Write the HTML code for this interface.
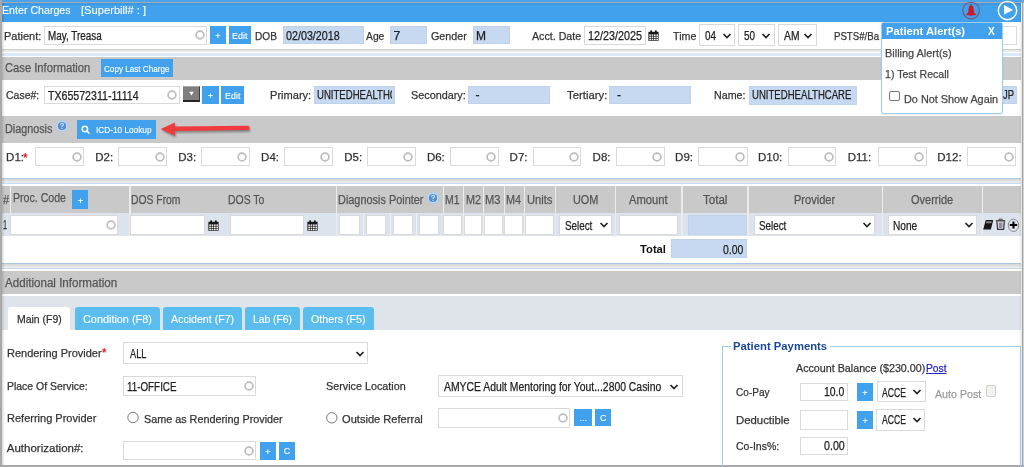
<!DOCTYPE html>
<html><head><meta charset="utf-8"><style>
html,body{margin:0;padding:0;width:1024px;height:467px;overflow:hidden;background:#fff}
body{position:relative;font-family:"Liberation Sans",sans-serif}
.a{position:absolute}
.t{position:absolute;white-space:nowrap;transform-origin:0 0;-webkit-text-stroke:0.25px currentColor}
</style></head><body>
<div style="position:absolute;left:0;top:0;width:1024px;height:467px;filter:blur(0.3px)">
<div class="a" style="left:0px;top:0px;width:1024px;height:467px;background:#fff;"></div>
<div class="a" style="left:0px;top:0px;width:1024px;height:1.5px;background:#4aa3ec;"></div>
<div class="a" style="left:0px;top:1.5px;width:1024px;height:1.5px;background:#a3abb3;"></div>
<div class="a" style="left:2px;top:3px;width:1019px;height:18.5px;background:#42a1ec;"></div>
<div class="a" style="left:2px;top:3px;width:1019px;height:2px;background:#3e98e0;"></div>
<div class="a" style="left:2px;top:48.6px;width:1019px;height:1.7999999999999972px;background:#cdcdcd;"></div>
<div class="a" style="left:2px;top:50.4px;width:1019px;height:2.1000000000000014px;background:#ebe9e5;"></div>
<div class="a" style="left:2px;top:52.5px;width:1019px;height:3.0px;background:#dbe9f8;"></div>
<div class="a" style="left:2px;top:56.5px;width:1019px;height:23.799999999999997px;background:#c9c9c9;"></div>
<div class="a" style="left:2px;top:115.6px;width:1019px;height:27.400000000000006px;background:#c9c9c9;"></div>
<div class="a" style="left:2px;top:177.8px;width:1019px;height:1.299999999999983px;background:#a9c9ea;"></div>
<div class="a" style="left:2px;top:179.1px;width:1019px;height:3.8000000000000114px;background:linear-gradient(#d6d6d6,#efefef);"></div>
<div class="a" style="left:2px;top:182.9px;width:1019px;height:1.299999999999983px;background:#c3dcf4;"></div>
<div class="a" style="left:2px;top:186px;width:1019px;height:26.69999999999999px;background:#c9c9c9;"></div>
<div class="a" style="left:2px;top:213px;width:1019px;height:22.5px;background:#dde3ec;"></div>
<div class="a" style="left:363px;top:213px;width:1px;height:22.5px;background:#eef0f3;"></div>
<div class="a" style="left:389.5px;top:213px;width:1.0px;height:22.5px;background:#eef0f3;"></div>
<div class="a" style="left:416px;top:213px;width:1px;height:22.5px;background:#eef0f3;"></div>
<div class="a" style="left:2px;top:262.5px;width:1019px;height:1.5px;background:#a9c9ea;"></div>
<div class="a" style="left:2px;top:264px;width:1019px;height:3.6000000000000227px;background:linear-gradient(#d6d6d6,#efefef);"></div>
<div class="a" style="left:2px;top:267.6px;width:1019px;height:1.7999999999999545px;background:#c3dcf4;"></div>
<div class="a" style="left:2px;top:271px;width:1019px;height:23px;background:#c9c9c9;"></div>
<div class="a" style="left:2px;top:296.2px;width:1019px;height:34.0px;background:#dfe3ea;"></div>
<div class="a" style="left:0px;top:0px;width:2px;height:467px;background:#a8a8a8;"></div>
<div class="a" style="left:2px;top:3px;width:3px;height:464px;background:linear-gradient(90deg,rgba(0,0,0,0.14),rgba(0,0,0,0));"></div>
<div class="a" style="left:1021.5px;top:0px;width:1.5px;height:467px;background:#a3a3a3;"></div>
<div class="a" style="left:1023px;top:3px;width:1px;height:464px;background:#d4d4d4;"></div>
<div class="a" style="left:1019px;top:3px;width:2.5px;height:464px;background:linear-gradient(90deg,rgba(0,0,0,0),rgba(0,0,0,0.10));"></div>
<div class="a" style="left:0px;top:464.6px;width:1024px;height:2.3999999999999773px;background:#a8a8a8;"></div>
<div class="t" style="left:2.3px;top:4.77px;font-size:11.5px;line-height:11.5px;color:#fff;-webkit-text-stroke:0.1px currentColor;transform:scaleX(0.925);">Enter Charges</div>
<div class="t" style="left:81px;top:4.77px;font-size:11.5px;line-height:11.5px;color:#fff;-webkit-text-stroke:0.1px currentColor;transform:scaleX(0.971);">[Superbill# : ]</div>
<svg class="a" style="left:961px;top:0px;" width="21" height="21" viewBox="0 0 21 21"><circle cx="10.1" cy="10.6" r="8.3" fill="none" stroke="#7d5275" stroke-width="1.1"/><path d="M10.1 5.2 Q7.9 5.2 7.6 8.2 L7.3 11.6 Q7 13.3 5.2 14.4 L5.6 15.2 L14.6 15.2 L15 14.4 Q13.2 13.3 12.9 11.6 L12.6 8.2 Q12.3 5.2 10.1 5.2 Z" fill="#cc1a26"/><rect x="9.5" y="4.3" width="1.2" height="1.3" fill="#cc1a26"/><path d="M8.7 15.2 Q10.1 17.4 11.5 15.2 Z" fill="#cc1a26"/></svg>
<svg class="a" style="left:996px;top:0px;" width="24" height="22" viewBox="0 0 24 22"><circle cx="11.5" cy="10.6" r="9.2" fill="none" stroke="#fff" stroke-width="1.4"/><path d="M8 5 L17 10 L8 14.6 Z" fill="#fff"/></svg>
<div class="t" style="left:3.9px;top:30.87px;font-size:11.5px;line-height:11.5px;color:#333;transform:scaleX(0.956);">Patient:</div>
<div class="a" style="left:44.3px;top:26.3px;width:162.5px;height:18.3px;background:#fff;box-sizing:border-box;border:1px solid #d9d9d9;"></div>
<svg class="a" style="left:193.5px;top:29.450000000000003px;" width="12" height="12" viewBox="0 0 12 12"><circle cx="6" cy="6" r="3.9" fill="none" stroke="#bcbcbc" stroke-width="1.7"/></svg>
<div class="t" style="left:47.5px;top:30.04px;font-size:12px;line-height:12px;color:#222;transform:scaleX(0.824);">May, Treasa</div>
<div class="a" style="left:209.9px;top:26px;width:16.099999999999994px;height:17.9px;background:#42a1ec;"></div>
<div class="t" style="left:215.32px;top:31.87px;font-size:9px;line-height:9px;color:#fff;-webkit-text-stroke:0.1px currentColor;">+</div>
<div class="a" style="left:229px;top:26px;width:22.30000000000001px;height:17.9px;background:#42a1ec;"></div>
<div class="t" style="left:232.3px;top:31.26px;font-size:9.5px;line-height:9.5px;color:#fff;-webkit-text-stroke:0.1px currentColor;transform:scaleX(0.938);">Edit</div>
<div class="t" style="left:254.7px;top:30.57px;font-size:11.5px;line-height:11.5px;color:#333;transform:scaleX(0.879);">DOB</div>
<div class="a" style="left:283px;top:26.3px;width:80.5px;height:17.999999999999996px;background:#c6d9f1;box-sizing:border-box;border:1px solid #c0d2ea;"></div>
<div class="t" style="left:285.8px;top:29.84px;font-size:12px;line-height:12px;color:#222;transform:scaleX(0.894);">02/03/2018</div>
<div class="t" style="left:366.3px;top:30.77px;font-size:11.5px;line-height:11.5px;color:#333;transform:scaleX(0.897);">Age</div>
<div class="a" style="left:390.2px;top:26.3px;width:37.10000000000002px;height:17.999999999999996px;background:#c6d9f1;box-sizing:border-box;border:1px solid #c0d2ea;"></div>
<div class="t" style="left:393.5px;top:29.84px;font-size:12px;line-height:12px;color:#222;">7</div>
<div class="t" style="left:430.8px;top:30.77px;font-size:11.5px;line-height:11.5px;color:#333;transform:scaleX(0.932);">Gender</div>
<div class="a" style="left:472.8px;top:26.3px;width:37.5px;height:17.999999999999996px;background:#c6d9f1;box-sizing:border-box;border:1px solid #c0d2ea;"></div>
<div class="t" style="left:476px;top:29.84px;font-size:12px;line-height:12px;color:#222;">M</div>
<div class="t" style="left:532.2px;top:30.77px;font-size:11.5px;line-height:11.5px;color:#333;transform:scaleX(0.927);">Acct. Date</div>
<div class="a" style="left:584.2px;top:26.1px;width:61.5px;height:18.799999999999997px;background:#fff;box-sizing:border-box;border:1px solid #d9d9d9;"></div>
<div class="t" style="left:587.5px;top:29.84px;font-size:12px;line-height:12px;color:#222;transform:scaleX(0.899);">12/23/2025</div>
<svg class="a" style="left:647.6px;top:30px;" width="11" height="11" viewBox="0 0 11 11"><rect x="0.4" y="1.8" width="10.2" height="9" fill="#1a1a1a"/><rect x="1.30" y="4.40" width="1.65" height="1.5" fill="#f4f4f4"/><rect x="1.30" y="6.55" width="1.65" height="1.5" fill="#f4f4f4"/><rect x="1.30" y="8.70" width="1.65" height="1.5" fill="#f4f4f4"/><rect x="3.65" y="4.40" width="1.65" height="1.5" fill="#f4f4f4"/><rect x="3.65" y="6.55" width="1.65" height="1.5" fill="#f4f4f4"/><rect x="3.65" y="8.70" width="1.65" height="1.5" fill="#f4f4f4"/><rect x="6.00" y="4.40" width="1.65" height="1.5" fill="#f4f4f4"/><rect x="6.00" y="6.55" width="1.65" height="1.5" fill="#f4f4f4"/><rect x="6.00" y="8.70" width="1.65" height="1.5" fill="#f4f4f4"/><rect x="8.35" y="4.40" width="1.65" height="1.5" fill="#f4f4f4"/><rect x="8.35" y="6.55" width="1.65" height="1.5" fill="#f4f4f4"/><rect x="8.35" y="8.70" width="1.65" height="1.5" fill="#f4f4f4"/><rect x="2.2" y="0.2" width="1.9" height="3" rx="0.9" fill="#1a1a1a"/><rect x="6.9" y="0.2" width="1.9" height="3" rx="0.9" fill="#1a1a1a"/></svg>
<div class="t" style="left:672.9px;top:30.77px;font-size:11.5px;line-height:11.5px;color:#333;transform:scaleX(0.930);">Time</div>
<div class="a" style="left:699.4px;top:24.4px;width:36.10000000000002px;height:21.5px;background:#fff;box-sizing:border-box;border:1px solid #d9d9d9;"></div>
<div class="t" style="left:705.2px;top:29.84px;font-size:12px;line-height:12px;color:#222;transform:scaleX(0.819);">04</div>
<svg class="a" style="left:722px;top:31.65px;" width="10" height="8" viewBox="0 0 10 8"><path d="M1.5 2 L5 5.5 L8.5 2" fill="none" stroke="#222" stroke-width="1.7"/></svg>
<div class="a" style="left:738.4px;top:24.4px;width:36.60000000000002px;height:21.5px;background:#fff;box-sizing:border-box;border:1px solid #d9d9d9;"></div>
<div class="t" style="left:744.3px;top:29.84px;font-size:12px;line-height:12px;color:#222;transform:scaleX(0.819);">50</div>
<svg class="a" style="left:761px;top:31.65px;" width="10" height="8" viewBox="0 0 10 8"><path d="M1.5 2 L5 5.5 L8.5 2" fill="none" stroke="#222" stroke-width="1.7"/></svg>
<div class="a" style="left:778.3px;top:24.4px;width:39.200000000000045px;height:21.5px;background:#fff;box-sizing:border-box;border:1px solid #d9d9d9;"></div>
<div class="t" style="left:784px;top:29.84px;font-size:12px;line-height:12px;color:#222;transform:scaleX(0.861);">AM</div>
<svg class="a" style="left:803px;top:31.65px;" width="10" height="8" viewBox="0 0 10 8"><path d="M1.5 2 L5 5.5 L8.5 2" fill="none" stroke="#222" stroke-width="1.7"/></svg>
<div class="t" style="left:834.1px;top:30.77px;font-size:11.5px;line-height:11.5px;color:#333;transform:scaleX(0.838);">PSTS#/Ba</div>
<div class="a" style="left:950px;top:26.3px;width:66.60000000000002px;height:18.499999999999996px;background:#fff;box-sizing:border-box;border:1px solid #d9d9d9;"></div>
<div class="t" style="left:4.7px;top:61.54px;font-size:12px;line-height:12px;color:#555;transform:scaleX(0.933);">Case Information</div>
<div class="a" style="left:100.6px;top:59px;width:72.4px;height:18.200000000000003px;background:#42a1ec;"></div>
<div class="t" style="left:104.1px;top:64.88px;font-size:9px;line-height:9px;color:#fff;-webkit-text-stroke:0.1px currentColor;transform:scaleX(0.902);">Copy Last Charge</div>
<div class="t" style="left:5.9px;top:90.17px;font-size:11.5px;line-height:11.5px;color:#333;transform:scaleX(0.913);">Case#:</div>
<div class="a" style="left:44.3px;top:85.8px;width:135.39999999999998px;height:18.60000000000001px;background:#fff;box-sizing:border-box;border:1px solid #d9d9d9;"></div>
<svg class="a" style="left:166.39999999999998px;top:89.1px;" width="12" height="12" viewBox="0 0 12 12"><circle cx="6" cy="6" r="3.9" fill="none" stroke="#bcbcbc" stroke-width="1.7"/></svg>
<div class="t" style="left:47.9px;top:89.54px;font-size:12px;line-height:12px;color:#222;transform:scaleX(0.883);">TX65572311-11114</div>
<div class="a" style="left:182.8px;top:85.9px;width:16.8px;height:16px;background:#7f7f7f;box-sizing:border-box;border-top:1px solid #a9a9a9;border-bottom:2px solid #262626;border-right:1px solid #3a3a3a;"></div>
<svg class="a" style="left:187px;top:90px;" width="9" height="7" viewBox="0 0 9 7"><path d="M2.2 1.8 L6.8 1.8 L4.5 5.6 Z" fill="#fff"/></svg>
<div class="a" style="left:202.2px;top:85.8px;width:16.600000000000023px;height:18.0px;background:#42a1ec;"></div>
<div class="t" style="left:207.87px;top:91.72px;font-size:9px;line-height:9px;color:#fff;-webkit-text-stroke:0.1px currentColor;">+</div>
<div class="a" style="left:221.4px;top:85.8px;width:22.400000000000006px;height:18.0px;background:#42a1ec;"></div>
<div class="t" style="left:224.75px;top:91.06px;font-size:9.5px;line-height:9.5px;color:#fff;-webkit-text-stroke:0.1px currentColor;transform:scaleX(0.938);">Edit</div>
<div class="t" style="left:269.6px;top:90.37px;font-size:11.5px;line-height:11.5px;color:#333;transform:scaleX(0.962);">Primary:</div>
<div class="a" style="left:314px;top:86.2px;width:81.4px;height:18.2px;background:#c6d9f1;overflow:hidden;box-sizing:border-box;border:1px solid #c0d2ea"></div>
<div class="t" style="left:316.9px;top:89.34px;font-size:12px;line-height:12px;color:#222;transform:scaleX(0.799);width:93.94px;overflow:hidden;">UNITEDHEALTHCARE</div>
<div class="t" style="left:410.6px;top:90.37px;font-size:11.5px;line-height:11.5px;color:#333;transform:scaleX(0.940);">Secondary:</div>
<div class="a" style="left:468px;top:86.2px;width:81.70000000000005px;height:18.200000000000003px;background:#c6d9f1;box-sizing:border-box;border:1px solid #c0d2ea;"></div>
<div class="t" style="left:475.5px;top:89.04px;font-size:12px;line-height:12px;color:#222;">-</div>
<div class="t" style="left:566.8px;top:90.37px;font-size:11.5px;line-height:11.5px;color:#333;transform:scaleX(0.985);">Tertiary:</div>
<div class="a" style="left:609.4px;top:86.2px;width:81.5px;height:18.200000000000003px;background:#c6d9f1;box-sizing:border-box;border:1px solid #c0d2ea;"></div>
<div class="t" style="left:617px;top:89.04px;font-size:12px;line-height:12px;color:#222;">-</div>
<div class="t" style="left:713.7px;top:90.37px;font-size:11.5px;line-height:11.5px;color:#333;transform:scaleX(0.929);">Name:</div>
<div class="a" style="left:748.9px;top:85.8px;width:108.0px;height:18.799999999999997px;background:#c6d9f1;box-sizing:border-box;border:1px solid #c0d2ea;"></div>
<div class="t" style="left:751.7px;top:89.34px;font-size:12px;line-height:12px;color:#222;transform:scaleX(0.799);">UNITEDHEALTHCARE</div>
<div class="a" style="left:960px;top:86px;width:57.39999999999998px;height:18.400000000000006px;background:#c6d9f1;box-sizing:border-box;border:1px solid #c0d2ea;"></div>
<div class="t" style="left:1003px;top:89.34px;font-size:12px;line-height:12px;color:#222;transform:scaleX(0.786);">JP</div>
<div class="t" style="left:4.6px;top:122.94px;font-size:12px;line-height:12px;color:#555;transform:scaleX(0.900);">Diagnosis</div>
<svg class="a" style="left:54.5px;top:119.4px;" width="14" height="14" viewBox="0 0 14 14"><defs><radialGradient id="hg61" cx="50%" cy="40%" r="60%"><stop offset="0" stop-color="#6a9fd8"/><stop offset="1" stop-color="#4a82c2"/></radialGradient></defs><circle cx="7" cy="7" r="5.9" fill="#c0d9f0"/><circle cx="7" cy="7" r="5.9" fill="none" stroke="#a9c8e8" stroke-width="0.8"/><circle cx="7" cy="7" r="4.1" fill="url(#hg61)"/><path d="M5.6 5.8 Q5.6 4.3 7 4.3 Q8.5 4.3 8.5 5.6 Q8.5 6.4 7.5 6.9 Q7 7.2 7 8" fill="none" stroke="#dfeaf6" stroke-width="1.1" opacity="0.85"/><circle cx="7" cy="9.5" r="0.7" fill="#dfeaf6" opacity="0.85"/></svg>
<div class="a" style="left:77.4px;top:120.2px;width:78.19999999999999px;height:18.499999999999986px;background:#42a1ec;"></div>
<svg class="a" style="left:79px;top:122px;" width="14" height="14" viewBox="0 0 14 14"><circle cx="5.9" cy="7" r="2.7" fill="none" stroke="#fff" stroke-width="1.5"/><path d="M7.9 9 L9.9 11" stroke="#fff" stroke-width="1.7" stroke-linecap="round"/></svg>
<div class="t" style="left:96px;top:125.68px;font-size:9px;line-height:9px;color:#fff;-webkit-text-stroke:0.1px currentColor;transform:scaleX(0.917);">ICD-10 Lookup</div>
<svg class="a" style="left:156px;top:118px;" width="100" height="24" viewBox="0 0 100 24"><defs><filter id="sh" x="-20%" y="-50%" width="140%" height="200%"><feGaussianBlur stdDeviation="1.2"/></filter></defs><g transform="translate(0.8,1.6)" opacity="0.35" filter="url(#sh)"><path d="M4.7 11 L18.9 4.5 L18.9 8.6 L92.5 8 Q94.6 10.2 92.5 12.3 L18.9 13.1 L18.9 18 Z" fill="#000"/></g><path d="M4.7 11 L18.9 4.5 L18.9 8.6 L92.5 7.7 Q94.8 9.9 92.5 12.1 L18.9 13.1 L18.9 18 Z" fill="#ef3b3e"/></svg>
<div class="t" style="left:6.1px;top:152.07px;font-size:11.5px;line-height:11.5px;color:#333;">D1:</div>
<div class="a" style="left:35px;top:147.1px;width:48.8px;height:19.30000000000001px;background:#fff;box-sizing:border-box;border:1px solid #d9d9d9;"></div>
<svg class="a" style="left:70.5px;top:150.75px;" width="12" height="12" viewBox="0 0 12 12"><circle cx="6" cy="6" r="3.9" fill="none" stroke="#bcbcbc" stroke-width="1.7"/></svg>
<div class="t" style="left:95.2px;top:152.07px;font-size:11.5px;line-height:11.5px;color:#333;">D2:</div>
<div class="a" style="left:118px;top:147.1px;width:48.80000000000001px;height:19.30000000000001px;background:#fff;box-sizing:border-box;border:1px solid #d9d9d9;"></div>
<svg class="a" style="left:153.5px;top:150.75px;" width="12" height="12" viewBox="0 0 12 12"><circle cx="6" cy="6" r="3.9" fill="none" stroke="#bcbcbc" stroke-width="1.7"/></svg>
<div class="t" style="left:178.2px;top:152.07px;font-size:11.5px;line-height:11.5px;color:#333;">D3:</div>
<div class="a" style="left:201px;top:147.1px;width:48.5px;height:19.30000000000001px;background:#fff;box-sizing:border-box;border:1px solid #d9d9d9;"></div>
<svg class="a" style="left:236.2px;top:150.75px;" width="12" height="12" viewBox="0 0 12 12"><circle cx="6" cy="6" r="3.9" fill="none" stroke="#bcbcbc" stroke-width="1.7"/></svg>
<div class="t" style="left:261.1px;top:152.07px;font-size:11.5px;line-height:11.5px;color:#333;">D4:</div>
<div class="a" style="left:284.3px;top:147.1px;width:48.39999999999998px;height:19.30000000000001px;background:#fff;box-sizing:border-box;border:1px solid #d9d9d9;"></div>
<svg class="a" style="left:319.4px;top:150.75px;" width="12" height="12" viewBox="0 0 12 12"><circle cx="6" cy="6" r="3.9" fill="none" stroke="#bcbcbc" stroke-width="1.7"/></svg>
<div class="t" style="left:344.2px;top:152.07px;font-size:11.5px;line-height:11.5px;color:#333;">D5:</div>
<div class="a" style="left:367px;top:147.1px;width:48.69999999999999px;height:19.30000000000001px;background:#fff;box-sizing:border-box;border:1px solid #d9d9d9;"></div>
<svg class="a" style="left:402.4px;top:150.75px;" width="12" height="12" viewBox="0 0 12 12"><circle cx="6" cy="6" r="3.9" fill="none" stroke="#bcbcbc" stroke-width="1.7"/></svg>
<div class="t" style="left:426.9px;top:152.07px;font-size:11.5px;line-height:11.5px;color:#333;">D6:</div>
<div class="a" style="left:450px;top:147.1px;width:48.69999999999999px;height:19.30000000000001px;background:#fff;box-sizing:border-box;border:1px solid #d9d9d9;"></div>
<svg class="a" style="left:485.4px;top:150.75px;" width="12" height="12" viewBox="0 0 12 12"><circle cx="6" cy="6" r="3.9" fill="none" stroke="#bcbcbc" stroke-width="1.7"/></svg>
<div class="t" style="left:509.6px;top:152.07px;font-size:11.5px;line-height:11.5px;color:#333;">D7:</div>
<div class="a" style="left:533px;top:147.1px;width:48.200000000000045px;height:19.30000000000001px;background:#fff;box-sizing:border-box;border:1px solid #d9d9d9;"></div>
<svg class="a" style="left:567.9000000000001px;top:150.75px;" width="12" height="12" viewBox="0 0 12 12"><circle cx="6" cy="6" r="3.9" fill="none" stroke="#bcbcbc" stroke-width="1.7"/></svg>
<div class="t" style="left:592.6px;top:152.07px;font-size:11.5px;line-height:11.5px;color:#333;">D8:</div>
<div class="a" style="left:615.5px;top:147.1px;width:49.0px;height:19.30000000000001px;background:#fff;box-sizing:border-box;border:1px solid #d9d9d9;"></div>
<svg class="a" style="left:651.2px;top:150.75px;" width="12" height="12" viewBox="0 0 12 12"><circle cx="6" cy="6" r="3.9" fill="none" stroke="#bcbcbc" stroke-width="1.7"/></svg>
<div class="t" style="left:675.1px;top:152.07px;font-size:11.5px;line-height:11.5px;color:#333;">D9:</div>
<div class="a" style="left:698px;top:147.1px;width:49.5px;height:19.30000000000001px;background:#fff;box-sizing:border-box;border:1px solid #d9d9d9;"></div>
<svg class="a" style="left:734.2px;top:150.75px;" width="12" height="12" viewBox="0 0 12 12"><circle cx="6" cy="6" r="3.9" fill="none" stroke="#bcbcbc" stroke-width="1.7"/></svg>
<div class="t" style="left:758px;top:152.07px;font-size:11.5px;line-height:11.5px;color:#333;">D10:</div>
<div class="a" style="left:788.3px;top:147.1px;width:48.10000000000002px;height:19.30000000000001px;background:#fff;box-sizing:border-box;border:1px solid #d9d9d9;"></div>
<svg class="a" style="left:823.1px;top:150.75px;" width="12" height="12" viewBox="0 0 12 12"><circle cx="6" cy="6" r="3.9" fill="none" stroke="#bcbcbc" stroke-width="1.7"/></svg>
<div class="t" style="left:847.7px;top:152.07px;font-size:11.5px;line-height:11.5px;color:#333;">D11:</div>
<div class="a" style="left:877.9px;top:147.1px;width:48.700000000000045px;height:19.30000000000001px;background:#fff;box-sizing:border-box;border:1px solid #d9d9d9;"></div>
<svg class="a" style="left:913.3000000000001px;top:150.75px;" width="12" height="12" viewBox="0 0 12 12"><circle cx="6" cy="6" r="3.9" fill="none" stroke="#bcbcbc" stroke-width="1.7"/></svg>
<div class="t" style="left:937.3px;top:152.07px;font-size:11.5px;line-height:11.5px;color:#333;">D12:</div>
<div class="a" style="left:967.3px;top:147.1px;width:49.0px;height:19.30000000000001px;background:#fff;box-sizing:border-box;border:1px solid #d9d9d9;"></div>
<svg class="a" style="left:1003.0px;top:150.75px;" width="12" height="12" viewBox="0 0 12 12"><circle cx="6" cy="6" r="3.9" fill="none" stroke="#bcbcbc" stroke-width="1.7"/></svg>
<div class="t" style="left:22.6px;top:150.5px;font-size:13px;line-height:13px;color:#e82020;font-weight:bold;-webkit-text-stroke:0;transform:scaleX(0.900);">*</div>
<div class="a" style="left:9.9px;top:186px;width:1.1999999999999993px;height:49.400000000000006px;background:#ececec;"></div>
<div class="a" style="left:129.4px;top:186px;width:1.1999999999999886px;height:49.400000000000006px;background:#ececec;"></div>
<div class="a" style="left:336.2px;top:186px;width:1.1999999999999886px;height:49.400000000000006px;background:#ececec;"></div>
<div class="a" style="left:442.7px;top:186px;width:1.1999999999999886px;height:49.400000000000006px;background:#ececec;"></div>
<div class="a" style="left:463px;top:186px;width:1.1999999999999886px;height:49.400000000000006px;background:#ececec;"></div>
<div class="a" style="left:482.8px;top:186px;width:1.1999999999999886px;height:49.400000000000006px;background:#ececec;"></div>
<div class="a" style="left:503.6px;top:186px;width:1.1999999999999886px;height:49.400000000000006px;background:#ececec;"></div>
<div class="a" style="left:523.9px;top:186px;width:1.2000000000000455px;height:49.400000000000006px;background:#ececec;"></div>
<div class="a" style="left:555.1px;top:186px;width:1.2000000000000455px;height:49.400000000000006px;background:#ececec;"></div>
<div class="a" style="left:615.3px;top:186px;width:1.2000000000000455px;height:49.400000000000006px;background:#ececec;"></div>
<div class="a" style="left:681.4px;top:186px;width:1.2000000000000455px;height:49.400000000000006px;background:#ececec;"></div>
<div class="a" style="left:747.4px;top:186px;width:1.2000000000000455px;height:49.400000000000006px;background:#ececec;"></div>
<div class="a" style="left:882.3px;top:186px;width:1.2000000000000455px;height:49.400000000000006px;background:#ececec;"></div>
<div class="a" style="left:982px;top:186px;width:1.2000000000000455px;height:49.400000000000006px;background:#ececec;"></div>
<div class="t" style="left:2.7px;top:193.94px;font-size:12px;line-height:12px;color:#555;transform:scaleX(0.914);">#</div>
<div class="t" style="left:13.2px;top:192.44px;font-size:12px;line-height:12px;color:#555;transform:scaleX(0.883);">Proc. Code</div>
<div class="a" style="left:72.3px;top:190.2px;width:16.0px;height:19.0px;background:#42a1ec;"></div>
<div class="t" style="left:77.67px;top:196.62px;font-size:9px;line-height:9px;color:#fff;-webkit-text-stroke:0.1px currentColor;">+</div>
<div class="t" style="left:130.7px;top:193.94px;font-size:12px;line-height:12px;color:#555;transform:scaleX(0.863);">DOS From</div>
<div class="t" style="left:227.6px;top:193.94px;font-size:12px;line-height:12px;color:#555;transform:scaleX(0.869);">DOS To</div>
<div class="t" style="left:337.5px;top:193.94px;font-size:12px;line-height:12px;color:#555;transform:scaleX(0.909);">Diagnosis Pointer</div>
<div class="t" style="left:445.2px;top:193.94px;font-size:12px;line-height:12px;color:#555;transform:scaleX(0.871);">M1</div>
<div class="t" style="left:465.5px;top:193.94px;font-size:12px;line-height:12px;color:#555;transform:scaleX(0.900);">M2</div>
<div class="t" style="left:485.3px;top:193.94px;font-size:12px;line-height:12px;color:#555;transform:scaleX(0.924);">M3</div>
<div class="t" style="left:505.6px;top:193.94px;font-size:12px;line-height:12px;color:#555;transform:scaleX(0.900);">M4</div>
<div class="t" style="left:527.2px;top:193.94px;font-size:12px;line-height:12px;color:#555;transform:scaleX(0.929);">Units</div>
<div class="t" style="left:572.9px;top:193.94px;font-size:12px;line-height:12px;color:#555;transform:scaleX(0.907);">UOM</div>
<div class="t" style="left:628.7px;top:193.94px;font-size:12px;line-height:12px;color:#555;transform:scaleX(0.935);">Amount</div>
<div class="t" style="left:702.5px;top:193.94px;font-size:12px;line-height:12px;color:#555;transform:scaleX(0.964);">Total</div>
<div class="t" style="left:794.4px;top:193.94px;font-size:12px;line-height:12px;color:#555;transform:scaleX(0.920);">Provider</div>
<div class="t" style="left:911.4px;top:193.94px;font-size:12px;line-height:12px;color:#555;transform:scaleX(0.917);">Override</div>
<svg class="a" style="left:425.9px;top:191.3px;" width="14" height="14" viewBox="0 0 14 14"><defs><radialGradient id="hg432" cx="50%" cy="40%" r="60%"><stop offset="0" stop-color="#6a9fd8"/><stop offset="1" stop-color="#4a82c2"/></radialGradient></defs><circle cx="7" cy="7" r="5.9" fill="#c0d9f0"/><circle cx="7" cy="7" r="5.9" fill="none" stroke="#a9c8e8" stroke-width="0.8"/><circle cx="7" cy="7" r="4.1" fill="url(#hg432)"/><path d="M5.6 5.8 Q5.6 4.3 7 4.3 Q8.5 4.3 8.5 5.6 Q8.5 6.4 7.5 6.9 Q7 7.2 7 8" fill="none" stroke="#dfeaf6" stroke-width="1.1" opacity="0.85"/><circle cx="7" cy="9.5" r="0.7" fill="#dfeaf6" opacity="0.85"/></svg>
<div class="t" style="left:2.7px;top:219.14px;font-size:12px;line-height:12px;color:#333;transform:scaleX(0.614);">1</div>
<div class="a" style="left:10.2px;top:215px;width:108.3px;height:19.5px;background:#fff;box-sizing:border-box;border:1px solid #d9d9d9;"></div>
<svg class="a" style="left:105.2px;top:218.75px;" width="12" height="12" viewBox="0 0 12 12"><circle cx="6" cy="6" r="3.9" fill="none" stroke="#bcbcbc" stroke-width="1.7"/></svg>
<div class="a" style="left:130.2px;top:215px;width:74.80000000000001px;height:19.5px;background:#fff;box-sizing:border-box;border:1px solid #d9d9d9;"></div>
<svg class="a" style="left:207.8px;top:219.5px;" width="11" height="11" viewBox="0 0 11 11"><rect x="0.4" y="1.8" width="10.2" height="9" fill="#1a1a1a"/><rect x="1.30" y="4.40" width="1.65" height="1.5" fill="#f4f4f4"/><rect x="1.30" y="6.55" width="1.65" height="1.5" fill="#f4f4f4"/><rect x="1.30" y="8.70" width="1.65" height="1.5" fill="#f4f4f4"/><rect x="3.65" y="4.40" width="1.65" height="1.5" fill="#f4f4f4"/><rect x="3.65" y="6.55" width="1.65" height="1.5" fill="#f4f4f4"/><rect x="3.65" y="8.70" width="1.65" height="1.5" fill="#f4f4f4"/><rect x="6.00" y="4.40" width="1.65" height="1.5" fill="#f4f4f4"/><rect x="6.00" y="6.55" width="1.65" height="1.5" fill="#f4f4f4"/><rect x="6.00" y="8.70" width="1.65" height="1.5" fill="#f4f4f4"/><rect x="8.35" y="4.40" width="1.65" height="1.5" fill="#f4f4f4"/><rect x="8.35" y="6.55" width="1.65" height="1.5" fill="#f4f4f4"/><rect x="8.35" y="8.70" width="1.65" height="1.5" fill="#f4f4f4"/><rect x="2.2" y="0.2" width="1.9" height="3" rx="0.9" fill="#1a1a1a"/><rect x="6.9" y="0.2" width="1.9" height="3" rx="0.9" fill="#1a1a1a"/></svg>
<div class="a" style="left:229.6px;top:215px;width:74.9px;height:19.5px;background:#fff;box-sizing:border-box;border:1px solid #d9d9d9;"></div>
<svg class="a" style="left:307.4px;top:219.5px;" width="11" height="11" viewBox="0 0 11 11"><rect x="0.4" y="1.8" width="10.2" height="9" fill="#1a1a1a"/><rect x="1.30" y="4.40" width="1.65" height="1.5" fill="#f4f4f4"/><rect x="1.30" y="6.55" width="1.65" height="1.5" fill="#f4f4f4"/><rect x="1.30" y="8.70" width="1.65" height="1.5" fill="#f4f4f4"/><rect x="3.65" y="4.40" width="1.65" height="1.5" fill="#f4f4f4"/><rect x="3.65" y="6.55" width="1.65" height="1.5" fill="#f4f4f4"/><rect x="3.65" y="8.70" width="1.65" height="1.5" fill="#f4f4f4"/><rect x="6.00" y="4.40" width="1.65" height="1.5" fill="#f4f4f4"/><rect x="6.00" y="6.55" width="1.65" height="1.5" fill="#f4f4f4"/><rect x="6.00" y="8.70" width="1.65" height="1.5" fill="#f4f4f4"/><rect x="8.35" y="4.40" width="1.65" height="1.5" fill="#f4f4f4"/><rect x="8.35" y="6.55" width="1.65" height="1.5" fill="#f4f4f4"/><rect x="8.35" y="8.70" width="1.65" height="1.5" fill="#f4f4f4"/><rect x="2.2" y="0.2" width="1.9" height="3" rx="0.9" fill="#1a1a1a"/><rect x="6.9" y="0.2" width="1.9" height="3" rx="0.9" fill="#1a1a1a"/></svg>
<div class="a" style="left:339.3px;top:215px;width:20.30000000000001px;height:19.5px;background:#fff;box-sizing:border-box;border:1px solid #d9d9d9;"></div>
<div class="a" style="left:366px;top:215px;width:20.19999999999999px;height:19.5px;background:#fff;box-sizing:border-box;border:1px solid #d9d9d9;"></div>
<div class="a" style="left:392.6px;top:215px;width:20.299999999999955px;height:19.5px;background:#fff;box-sizing:border-box;border:1px solid #d9d9d9;"></div>
<div class="a" style="left:419.2px;top:215px;width:20.30000000000001px;height:19.5px;background:#fff;box-sizing:border-box;border:1px solid #d9d9d9;"></div>
<div class="a" style="left:443.2px;top:215px;width:18.5px;height:19.5px;background:#fff;box-sizing:border-box;border:1px solid #d9d9d9;"></div>
<div class="a" style="left:463.8px;top:215px;width:18.19999999999999px;height:19.5px;background:#fff;box-sizing:border-box;border:1px solid #d9d9d9;"></div>
<div class="a" style="left:484px;top:215px;width:18.80000000000001px;height:19.5px;background:#fff;box-sizing:border-box;border:1px solid #d9d9d9;"></div>
<div class="a" style="left:504.4px;top:215px;width:18.200000000000045px;height:19.5px;background:#fff;box-sizing:border-box;border:1px solid #d9d9d9;"></div>
<div class="a" style="left:525.2px;top:215px;width:28.699999999999932px;height:19.5px;background:#fff;box-sizing:border-box;border:1px solid #d9d9d9;"></div>
<div class="a" style="left:619px;top:215px;width:58.5px;height:19.5px;background:#fff;box-sizing:border-box;border:1px solid #d9d9d9;"></div>
<div class="a" style="left:558.7px;top:214.6px;width:53.299999999999955px;height:20.700000000000017px;background:#fff;box-sizing:border-box;border:1px solid #d9d9d9;"></div>
<div class="t" style="left:564.5px;top:219.54px;font-size:12px;line-height:12px;color:#222;transform:scaleX(0.820);">Select</div>
<svg class="a" style="left:598.8px;top:221.45px;" width="10" height="8" viewBox="0 0 10 8"><path d="M1.5 2 L5 5.5 L8.5 2" fill="none" stroke="#222" stroke-width="1.7"/></svg>
<div class="a" style="left:687.8px;top:215px;width:58.80000000000007px;height:19.5px;background:#c6d9f1;box-sizing:border-box;border:1px solid #c0d2ea;"></div>
<div class="a" style="left:753.8px;top:214.6px;width:121.20000000000005px;height:20.700000000000017px;background:#fff;box-sizing:border-box;border:1px solid #d9d9d9;"></div>
<div class="t" style="left:759.3px;top:219.54px;font-size:12px;line-height:12px;color:#222;transform:scaleX(0.820);">Select</div>
<svg class="a" style="left:861.7px;top:221.45px;" width="10" height="8" viewBox="0 0 10 8"><path d="M1.5 2 L5 5.5 L8.5 2" fill="none" stroke="#222" stroke-width="1.7"/></svg>
<div class="a" style="left:887.7px;top:214.6px;width:89.79999999999995px;height:20.700000000000017px;background:#fff;box-sizing:border-box;border:1px solid #d9d9d9;"></div>
<div class="t" style="left:893.3px;top:219.54px;font-size:12px;line-height:12px;color:#222;transform:scaleX(0.844);">None</div>
<svg class="a" style="left:964.2px;top:221.45px;" width="10" height="8" viewBox="0 0 10 8"><path d="M1.5 2 L5 5.5 L8.5 2" fill="none" stroke="#222" stroke-width="1.7"/></svg>
<svg class="a" style="left:982px;top:218px;" width="12" height="13" viewBox="0 0 12 13"><path d="M1.3 11.3 L3.6 2.6 Q3.9 2 4.6 2 L10.8 2 Q11.3 2.2 11 2.9 L8.9 11.3 Z" fill="#151515"/><path d="M4.4 3.3 L9.8 3.3 L9.3 5.2 L3.9 5.2 Z" fill="#8a8a8a"/><path d="M1.3 11.3 L8.9 11.3" stroke="#555" stroke-width="0.8"/></svg>
<svg class="a" style="left:995px;top:217px;" width="11" height="14" viewBox="0 0 11 14"><path d="M1.9 4.6 L2.6 12.4 L8.6 12.4 L9.3 4.6" fill="none" stroke="#333" stroke-width="1.2"/><path d="M0.7 3.8 H10.3" stroke="#333" stroke-width="1.3"/><path d="M4 3.4 V2.2 H7.2 V3.4" fill="none" stroke="#444" stroke-width="1"/><path d="M4.3 5.6 V11 M5.6 5.6 V11 M6.9 5.6 V11" stroke="#6a5a6a" stroke-width="0.8"/></svg>
<svg class="a" style="left:1007px;top:218px;" width="13" height="16" viewBox="0 0 13 16"><ellipse cx="6.5" cy="7.3" rx="5.2" ry="6.2" fill="none" stroke="#8a8a8a" stroke-width="1"/><path d="M6.5 3.6 V10.6 M2.8 7 H10.2" stroke="#000" stroke-width="2.1"/></svg>
<div class="t" style="left:639.5px;top:243.77px;font-size:11.5px;line-height:11.5px;color:#111;font-weight:bold;-webkit-text-stroke:0;transform:scaleX(0.976);">Total</div>
<div class="a" style="left:671.3px;top:239px;width:75.40000000000009px;height:19px;background:#c6d9f1;box-sizing:border-box;border:1px solid #c0d2ea;"></div>
<div class="t" style="left:723.1px;top:243.54px;font-size:12px;line-height:12px;color:#222;transform:scaleX(0.870);">0.00</div>
<div class="t" style="left:4.7px;top:276.84px;font-size:12px;line-height:12px;color:#555;transform:scaleX(0.966);">Additional Information</div>
<div class="a" style="left:8.2px;top:307.3px;width:61.7px;height:23px;background:#fff;border-radius:3px 3px 0 0"></div>
<div class="t" style="left:16.6px;top:313.77px;font-size:11.5px;line-height:11.5px;color:#333;transform:scaleX(0.909);">Main (F9)</div>
<div class="a" style="left:74.8px;top:307.3px;width:85.0px;height:23px;background:#5bbdee;border-radius:3px 3px 0 0"></div>
<div class="t" style="left:83px;top:313.77px;font-size:11.5px;line-height:11.5px;color:#fff;-webkit-text-stroke:0.1px currentColor;transform:scaleX(0.945);">Condition (F8)</div>
<div class="a" style="left:163.1px;top:307.3px;width:78.9px;height:23px;background:#5bbdee;border-radius:3px 3px 0 0"></div>
<div class="t" style="left:171px;top:313.77px;font-size:11.5px;line-height:11.5px;color:#fff;-webkit-text-stroke:0.1px currentColor;transform:scaleX(0.923);">Accident (F7)</div>
<div class="a" style="left:245px;top:307.3px;width:55.0px;height:23px;background:#5bbdee;border-radius:3px 3px 0 0"></div>
<div class="t" style="left:253px;top:313.77px;font-size:11.5px;line-height:11.5px;color:#fff;-webkit-text-stroke:0.1px currentColor;transform:scaleX(0.894);">Lab (F6)</div>
<div class="a" style="left:303px;top:307.3px;width:70.8px;height:23px;background:#5bbdee;border-radius:3px 3px 0 0"></div>
<div class="t" style="left:311.3px;top:313.77px;font-size:11.5px;line-height:11.5px;color:#fff;-webkit-text-stroke:0.1px currentColor;transform:scaleX(0.928);">Others (F5)</div>
<div class="t" style="left:6.8px;top:347.67px;font-size:11.5px;line-height:11.5px;color:#333;transform:scaleX(0.955);">Rendering Provider</div>
<div class="t" style="left:102px;top:346.1px;font-size:13px;line-height:13px;color:#e82020;font-weight:bold;-webkit-text-stroke:0;transform:scaleX(0.867);">*</div>
<div class="a" style="left:123.4px;top:342.2px;width:244.79999999999998px;height:22.100000000000023px;background:#fff;box-sizing:border-box;border:1px solid #d9d9d9;"></div>
<div class="t" style="left:129.9px;top:347.54px;font-size:12px;line-height:12px;color:#222;transform:scaleX(0.766);">ALL</div>
<svg class="a" style="left:354.7px;top:349.75px;" width="10" height="8" viewBox="0 0 10 8"><path d="M1.5 2 L5 5.5 L8.5 2" fill="none" stroke="#222" stroke-width="1.7"/></svg>
<div class="t" style="left:6.8px;top:380.87px;font-size:11.5px;line-height:11.5px;color:#333;transform:scaleX(0.908);">Place Of Service:</div>
<div class="a" style="left:123.4px;top:376.4px;width:133.1px;height:20.100000000000023px;background:#fff;box-sizing:border-box;border:1px solid #d9d9d9;"></div>
<svg class="a" style="left:243.2px;top:380.45px;" width="12" height="12" viewBox="0 0 12 12"><circle cx="6" cy="6" r="3.9" fill="none" stroke="#bcbcbc" stroke-width="1.7"/></svg>
<div class="t" style="left:127.3px;top:380.54px;font-size:12px;line-height:12px;color:#222;transform:scaleX(0.819);">11-OFFICE</div>
<div class="t" style="left:326.4px;top:380.87px;font-size:11.5px;line-height:11.5px;color:#333;transform:scaleX(0.938);">Service Location</div>
<div class="a" style="left:438.4px;top:375px;width:244.20000000000005px;height:22.399999999999977px;background:#fff;box-sizing:border-box;border:1px solid #d9d9d9;"></div>
<div class="t" style="left:443.7px;top:380.54px;font-size:12px;line-height:12px;color:#222;transform:scaleX(0.866);">AMYCE Adult Mentoring for Yout...2800 Casino</div>
<svg class="a" style="left:668.9px;top:382.7px;" width="10" height="8" viewBox="0 0 10 8"><path d="M1.5 2 L5 5.5 L8.5 2" fill="none" stroke="#222" stroke-width="1.7"/></svg>
<div class="t" style="left:6.8px;top:412.67px;font-size:11.5px;line-height:11.5px;color:#333;transform:scaleX(0.957);">Referring Provider</div>
<svg class="a" style="left:126px;top:411px;" width="14" height="14" viewBox="0 0 14 14"><circle cx="7" cy="6.5" r="5.2" fill="#fff" stroke="#777" stroke-width="1"/></svg>
<div class="t" style="left:144px;top:413.67px;font-size:11.5px;line-height:11.5px;color:#333;transform:scaleX(0.939);">Same as Rendering Provider</div>
<svg class="a" style="left:325px;top:411px;" width="14" height="14" viewBox="0 0 14 14"><circle cx="6.8" cy="6.8" r="5.2" fill="#fff" stroke="#777" stroke-width="1"/></svg>
<div class="t" style="left:342.2px;top:413.67px;font-size:11.5px;line-height:11.5px;color:#333;transform:scaleX(0.965);">Outside Referral</div>
<div class="a" style="left:438.4px;top:408px;width:132.10000000000002px;height:19.5px;background:#fff;box-sizing:border-box;border:1px solid #d9d9d9;"></div>
<svg class="a" style="left:557.2px;top:411.75px;" width="12" height="12" viewBox="0 0 12 12"><circle cx="6" cy="6" r="3.9" fill="none" stroke="#bcbcbc" stroke-width="1.7"/></svg>
<div class="a" style="left:574.2px;top:408.5px;width:17.899999999999977px;height:17.899999999999977px;background:#42a1ec;"></div>
<div class="t" style="left:579.4px;top:413.57px;font-size:9px;line-height:9px;color:#fff;-webkit-text-stroke:0.1px currentColor;">...</div>
<div class="a" style="left:595.3px;top:408.5px;width:16.100000000000023px;height:17.899999999999977px;background:#42a1ec;"></div>
<div class="t" style="left:600.1px;top:413.57px;font-size:9px;line-height:9px;color:#fff;-webkit-text-stroke:0.1px currentColor;">C</div>
<div class="t" style="left:6.8px;top:443.47px;font-size:11.5px;line-height:11.5px;color:#333;">Authorization#:</div>
<div class="a" style="left:123.4px;top:441.4px;width:133.1px;height:18.200000000000045px;background:#fff;box-sizing:border-box;border:1px solid #d9d9d9;"></div>
<svg class="a" style="left:243.2px;top:444.5px;" width="12" height="12" viewBox="0 0 12 12"><circle cx="6" cy="6" r="3.9" fill="none" stroke="#bcbcbc" stroke-width="1.7"/></svg>
<div class="a" style="left:259.9px;top:441.6px;width:15.900000000000034px;height:18.399999999999977px;background:#42a1ec;"></div>
<div class="t" style="left:265.22px;top:447.72px;font-size:9px;line-height:9px;color:#fff;-webkit-text-stroke:0.1px currentColor;">+</div>
<div class="a" style="left:278.6px;top:441.6px;width:16.899999999999977px;height:18.399999999999977px;background:#42a1ec;"></div>
<div class="t" style="left:283.8px;top:446.92px;font-size:9px;line-height:9px;color:#fff;-webkit-text-stroke:0.1px currentColor;">C</div>
<div class="a" style="left:722px;top:346px;width:298.5px;height:124px;box-sizing:border-box;border:1px solid #9ccbec;"></div>
<div class="a" style="left:730.5px;top:338px;width:99.0px;height:12px;background:#fff;"></div>
<div class="t" style="left:733.4px;top:340.97px;font-size:11.5px;line-height:11.5px;color:#1a4799;font-weight:bold;-webkit-text-stroke:0;transform:scaleX(0.982);">Patient Payments</div>
<div class="t" style="left:796.3px;top:362.77px;font-size:11.5px;line-height:11.5px;color:#333;transform:scaleX(0.932);">Account Balance ($230.00)</div>
<div class="t" style="left:926px;top:362.77px;font-size:11.5px;line-height:11.5px;color:#2222cc;transform:scaleX(0.894);text-decoration:underline;">Post</div>
<div class="t" style="left:736.1px;top:387.17px;font-size:11.5px;line-height:11.5px;color:#333;transform:scaleX(0.876);">Co-Pay</div>
<div class="a" style="left:800.2px;top:383.1px;width:47.59999999999991px;height:18.299999999999955px;background:#fff;box-sizing:border-box;border:1px solid #d9d9d9;"></div>
<div class="t" style="left:824.4px;top:386.04px;font-size:12px;line-height:12px;color:#222;transform:scaleX(0.870);">10.0</div>
<div class="a" style="left:856.9px;top:383px;width:15.899999999999977px;height:18px;background:#42a1ec;"></div>
<div class="t" style="left:862.22px;top:388.92px;font-size:9px;line-height:9px;color:#fff;-webkit-text-stroke:0.1px currentColor;">+</div>
<div class="a" style="left:876.5px;top:381.4px;width:49.200000000000045px;height:20.900000000000034px;background:#fff;box-sizing:border-box;border:1px solid #d9d9d9;"></div>
<div class="t" style="left:882.4px;top:386.54px;font-size:12px;line-height:12px;color:#222;transform:scaleX(0.720);">ACCE</div>
<svg class="a" style="left:911.9px;top:388.35px;" width="10" height="8" viewBox="0 0 10 8"><path d="M1.5 2 L5 5.5 L8.5 2" fill="none" stroke="#222" stroke-width="1.7"/></svg>
<div class="t" style="left:935px;top:389.07px;font-size:11.5px;line-height:11.5px;color:#9a9a9a;transform:scaleX(0.928);">Auto Post</div>
<div class="a" style="left:985.7px;top:385.4px;width:10.799999999999955px;height:11.300000000000011px;background:#f4f2ee;box-sizing:border-box;border:1px solid #cfcfcf;border-radius:2px;"></div>
<div class="t" style="left:735.8px;top:415.47px;font-size:11.5px;line-height:11.5px;color:#333;transform:scaleX(0.988);">Deductible</div>
<div class="a" style="left:799.9px;top:410.3px;width:47.89999999999998px;height:19.30000000000001px;background:#fff;box-sizing:border-box;border:1px solid #d9d9d9;"></div>
<div class="a" style="left:856.8px;top:410.7px;width:16.5px;height:18.30000000000001px;background:#42a1ec;"></div>
<div class="t" style="left:862.42px;top:416.77px;font-size:9px;line-height:9px;color:#fff;-webkit-text-stroke:0.1px currentColor;">+</div>
<div class="a" style="left:876.1px;top:408.6px;width:49.39999999999998px;height:22.099999999999966px;background:#fff;box-sizing:border-box;border:1px solid #d9d9d9;"></div>
<div class="t" style="left:882px;top:414.04px;font-size:12px;line-height:12px;color:#222;transform:scaleX(0.720);">ACCE</div>
<svg class="a" style="left:911.5px;top:416.15px;" width="10" height="8" viewBox="0 0 10 8"><path d="M1.5 2 L5 5.5 L8.5 2" fill="none" stroke="#222" stroke-width="1.7"/></svg>
<div class="t" style="left:735.8px;top:440.57px;font-size:11.5px;line-height:11.5px;color:#333;transform:scaleX(0.913);">Co-Ins%:</div>
<div class="a" style="left:799.9px;top:436.5px;width:47.89999999999998px;height:18.899999999999977px;background:#fff;box-sizing:border-box;border:1px solid #d9d9d9;"></div>
<div class="t" style="left:824.1px;top:440.04px;font-size:12px;line-height:12px;color:#222;transform:scaleX(0.887);">0.00</div>
<div class="a" style="left:881px;top:21.6px;width:121.6px;height:92px;background:#fff;box-sizing:border-box;border:1px solid #9ccbf0;border-radius:3px;box-shadow:0 1px 2px rgba(0,0,0,0.08)"></div>
<div class="a" style="left:882px;top:22.6px;width:119.60000000000002px;height:16.299999999999997px;background:#42a1ec;"></div>
<div class="t" style="left:885.8px;top:25.67px;font-size:11.5px;line-height:11.5px;color:#fff;font-weight:bold;-webkit-text-stroke:0.1px currentColor;-webkit-text-stroke:0;transform:scaleX(0.972);">Patient Alert(s)</div>
<div class="t" style="left:988px;top:25.67px;font-size:11.5px;line-height:11.5px;color:#fff;font-weight:bold;-webkit-text-stroke:0.1px currentColor;-webkit-text-stroke:0;transform:scaleX(0.875);">X</div>
<div class="t" style="left:885.4px;top:47.67px;font-size:11.5px;line-height:11.5px;color:#444;transform:scaleX(0.949);">Billing Alert(s)</div>
<div class="t" style="left:885.4px;top:69.37px;font-size:11.5px;line-height:11.5px;color:#444;transform:scaleX(0.920);">1) Test Recall</div>
<div class="a" style="left:888.7px;top:90.9px;width:11.199999999999932px;height:10.599999999999994px;background:#fff;box-sizing:border-box;border:1px solid #777;border-radius:2px;"></div>
<div class="t" style="left:903.7px;top:93.67px;font-size:11.5px;line-height:11.5px;color:#444;transform:scaleX(0.944);">Do Not Show Again</div>
</div>
</body></html>
